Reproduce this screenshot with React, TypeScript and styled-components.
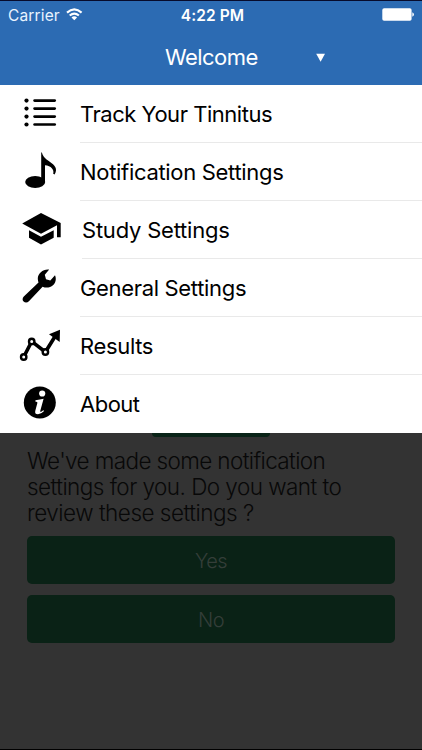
import React from 'react';
import styled, { createGlobalStyle } from 'styled-components';

const GlobalStyle = createGlobalStyle`
  * { box-sizing: border-box; }
  body { margin: 0; background: #333; font-family: Inter, "Liberation Sans", sans-serif; }
`;

const Screen = styled.div`
  width: 422px;
  height: 750px;
  display: flex;
  flex-direction: column;
  overflow: hidden;
  background: #333;
  border-top: 1px solid #070b2c;
  border-bottom: 1px solid #000;
`;

const Header = styled.header`
  height: 84px;
  flex: none;
  background: #2c6bb3;
  color: #fff;
`;

const StatusBar = styled.div`
  height: 28px;
  display: grid;
  grid-template-columns: 1fr auto 1fr;
  align-items: center;
  padding: 0 8px;
  font-size: 15.5px;
`;

const Carrier = styled.div`
  display: flex;
  align-items: center;
  gap: 6px;
  letter-spacing: 0.15px;
  color: #e9f4ff;
`;

const WifiIcon = styled.svg`
  display: block;
  margin-bottom: 2px;
`;

const Clock = styled.div`
  font-weight: 600;
  letter-spacing: 0.1px;
  padding-left: 3px;
`;

const Battery = styled.svg`
  justify-self: end;
  display: block;
  margin-bottom: 1px;
`;

const TitleBar = styled.div`
  height: 56px;
  display: grid;
  grid-template-columns: 165px 151px 1fr;
  align-items: center;
`;

const Title = styled.h1`
  grid-column: 2;
  margin: 0;
  font-size: 22px;
  line-height: 56px;
  font-weight: 400;
  letter-spacing: -0.55px;
`;

const Menu = styled.nav`
  flex: none;
  background: #fff;
  height: 348px;
`;

const MenuItem = styled.a`
  height: 58px;
  display: flex;
  color: #000;
`;

const MenuIcon = styled.svg`
  width: 80px;
  height: 58px;
  flex: none;
`;

const MenuLabel = styled.span<{ $inset: number; $spacing: number; $last: boolean }>`
  flex: 1;
  margin-left: ${(p) => p.$inset}px;
  height: 58px;
  line-height: 59px;
  font-size: 22px;
  letter-spacing: ${(p) => p.$spacing}px;
  white-space: nowrap;
  border-bottom: ${(p) => (p.$last ? 'none' : '1px solid #e9e9e9')};
`;

const Page = styled.main`
  flex: 1;
  padding: 0 27px;
`;

const HiddenButtonEdge = styled.div`
  width: 118px;
  height: 4px;
  margin-left: 125px;
  border-radius: 0 0 5px 5px;
  background: #0a2418;
`;

const Message = styled.p`
  margin: 11px 0 11px;
  height: 77px;
  font-size: 22.5px;
  line-height: 25.8px;
  font-weight: 300;
  color: #080808;
  white-space: nowrap;
`;

const Line = styled.span<{ $spacing: number }>`
  display: block;
  letter-spacing: ${(p) => p.$spacing}px;
`;

const Answer = styled.button`
  display: block;
  width: 368px;
  height: 48px;
  margin: 0 0 11px;
  border: 0;
  border-radius: 5px;
  background: #0a2216;
  color: #343e39;
  font: 300 20px/50px Inter, sans-serif;
  letter-spacing: -0.6px;
  padding: 0;
`;

const ListArt = () => (
  <>
    {[15.6, 23.6, 31.6, 39.5].map((y) => (
      <g key={y}>
        <circle cx="26.5" cy={y} r="2.1" />
        <path d={`M34.6 ${y}H54.7`} stroke="#000" strokeWidth="2.7" strokeLinecap="round" />
      </g>
    ))}
  </>
);

const NoteArt = () => (
  <>
    <ellipse cx="35.2" cy="39" rx="10" ry="6" />
    <path d="M41.2 9.5H41.9C43.2 14.2 45.8 16 49.4 18.5C55 22.2 58 25.8 54.6 31.5L53.2 30.8C54.5 26.5 51 22.8 45 22.2V39H41.2Z" />
  </>
);

const CapArt = () => (
  <>
    <path d="M22.2 22.4L41 12L60.7 22V36.2H57V24.2L41 32.8Z" />
    <path d="M29 29.3L41 35.8L53.7 29.3V36.8L41 43.4L29 36.8Z" />
  </>
);

const WrenchArt = () => (
  <path d="M49.2 10.6C43.2 9.8 38 14.2 37.8 19.3C37.8 21.1 38.1 22.3 38.5 23.5L23.8 37.5C22.2 39.2 22.3 41.2 23.6 42.5C25 44 27.3 43.9 28.9 42.3L42.6 27.7C48.9 30.4 55.8 26.2 55.8 19.9C55.8 18.4 55.5 17.3 55 16.2L50.3 21.6L46 20.2L44.8 15.7Z" />
);

const ResultsArt = () => (
  <>
    <path d="M23.7 40L31.7 24.4L45.4 35L55 19.5" fill="none" stroke="#000" strokeWidth="3.6" />
    <path d="M60 12.8L49 17.2L59.7 25Z" />
    {[[23.7, 40], [31.7, 24.4], [45.4, 35]].map(([x, y]) => (
      <circle key={x} cx={x} cy={y} r="2.7" fill="#fff" stroke="#000" strokeWidth="2.4" />
    ))}
  </>
);

const InfoArt = () => (
  <>
    <circle cx="39.8" cy="27.5" r="16" />
    <circle cx="42.2" cy="18.5" r="3.1" fill="#fff" />
    <path
      d="M35.5 25.3Q40 24.3 43.6 23.7L40.3 35.8Q40 37.4 41.2 36.8L43.3 35.2L44.1 36Q41.2 39.2 38 39.3Q34.4 39.2 35.3 35.7L37.3 28.3Q37.8 26.4 35.3 26.4Z"
      fill="#fff"
    />
  </>
);

const items = [
  { label: 'Track Your Tinnitus', Art: ListArt, inset: 0, spacing: -0.47 },
  { label: 'Notification Settings', Art: NoteArt, inset: 0, spacing: -0.31 },
  { label: 'Study Settings', Art: CapArt, inset: 2, spacing: -0.22 },
  { label: 'General Settings', Art: WrenchArt, inset: 0, spacing: -0.33 },
  { label: 'Results', Art: ResultsArt, inset: 0, spacing: -0.35 },
  { label: 'About', Art: InfoArt, inset: 0, spacing: -0.5 },
];

export default function App() {
  return (
    <>
      <GlobalStyle />
      <Screen>
        <Header>
          <StatusBar>
            <Carrier>
              Carrier
              <WifiIcon width="17" height="13" viewBox="0 0 17 13" fill="none" stroke="#fff" strokeWidth="2.1">
                <path d="M1 4.6Q8.3 -1.9 15.6 4.6" />
                <path d="M3.7 7.5Q8.3 3.6 12.9 7.5" />
                <path d="M5.5 9.4Q8.3 7 11.1 9.4L8.3 12.2Z" fill="#fff" stroke="none" />
              </WifiIcon>
            </Carrier>
            <Clock>4:22 PM</Clock>
            <Battery width="32" height="13" viewBox="0 0 32 13" fill="#fff">
              <rect x="0.3" y="0.2" width="29.3" height="12.5" rx="1.8" />
              <path d="M30.3 4.3Q32 5 32 6.5T30.3 8.7Z" />
            </Battery>
          </StatusBar>
          <TitleBar>
            <Title>Welcome</Title>
            <svg width="10" height="9" viewBox="0 0 10 9" fill="#fff">
              <path d="M0.2 0.8H9L4.6 8.8Z" />
            </svg>
          </TitleBar>
        </Header>
        <Menu>
          {items.map(({ label, Art, inset, spacing }, i) => (
            <MenuItem key={label}>
              <MenuIcon viewBox="0 0 80 58">
                <Art />
              </MenuIcon>
              <MenuLabel $inset={inset} $spacing={spacing} $last={i === items.length - 1}>
                {label}
              </MenuLabel>
            </MenuItem>
          ))}
        </Menu>
        <Page>
          <HiddenButtonEdge />
          <Message>
            <Line $spacing={-0.62}>We've made some notification</Line>
            <Line $spacing={-0.54}>settings for you. Do you want to</Line>
            <Line $spacing={-0.5}>review these settings ?</Line>
          </Message>
          <Answer>Yes</Answer>
          <Answer>No</Answer>
        </Page>
      </Screen>
    </>
  );
}
